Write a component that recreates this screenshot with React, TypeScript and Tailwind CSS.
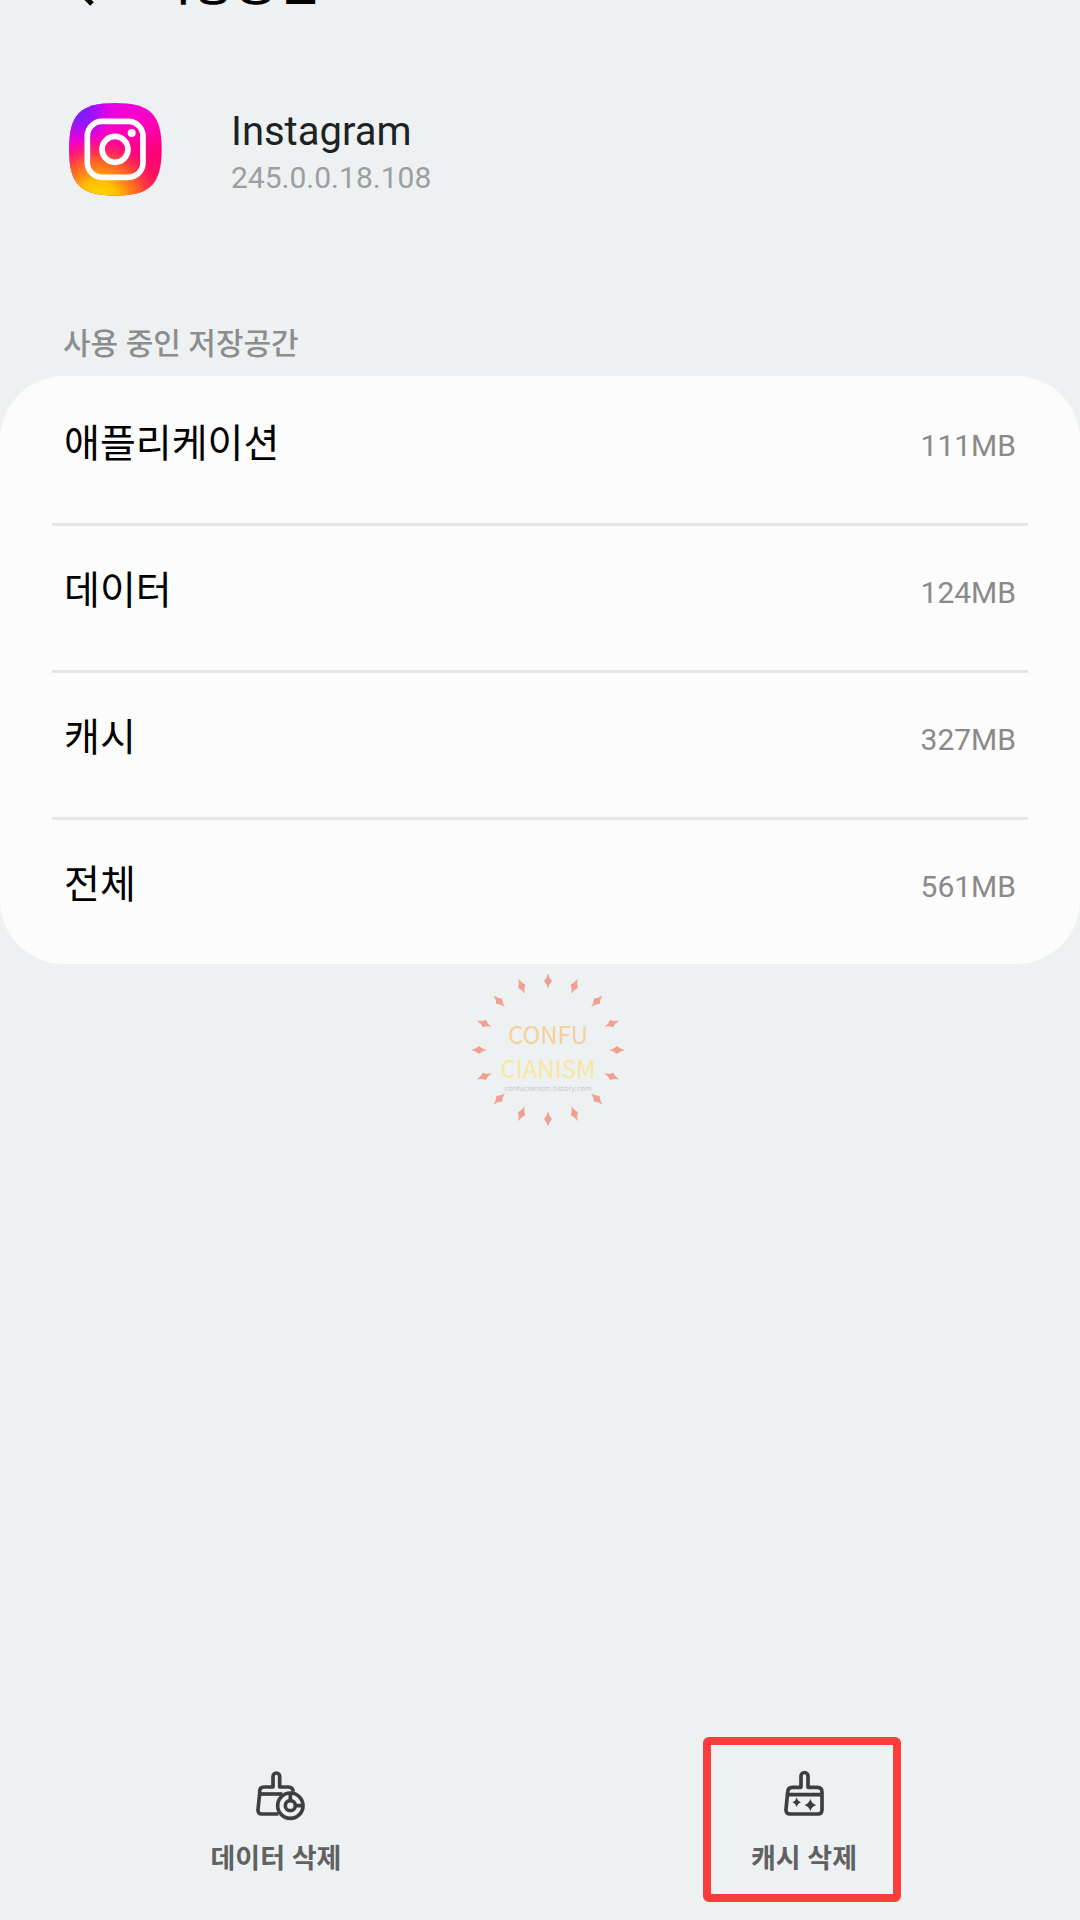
import React from "react";

interface StorageItem {
    label: string;
    value: string;
}

const storageItems: StorageItem[] = [
    { label: "애플리케이션", value: "111MB" },
    { label: "데이터", value: "124MB" },
    { label: "캐시", value: "327MB" },
    { label: "전체", value: "561MB" },
];

const rays = Array.from({ length: 16 }, (_, i) => i * 22.5);

const InstagramLogo: React.FC = () => (
    <svg viewBox="55 36 285 285" className="size-[95px]" aria-hidden="true">
        <defs>
            <linearGradient id="ig-base" x1="0.35" y1="0" x2="0.65" y2="1">
                <stop offset="0" stopColor="#e800ea" />
                <stop offset="0.35" stopColor="#ff00b8" />
                <stop offset="0.65" stopColor="#ff0078" />
                <stop offset="1" stopColor="#ff1a50" />
            </linearGradient>
            <radialGradient id="ig-violet" cx="0.1" cy="0.08" r="0.42">
                <stop offset="0" stopColor="#6a24ff" />
                <stop offset="0.4" stopColor="#8a18ff" stopOpacity="0.8" />
                <stop offset="1" stopColor="#d400ff" stopOpacity="0" />
            </radialGradient>
            <radialGradient id="ig-yellow" cx="0.32" cy="1.05" r="0.7">
                <stop offset="0" stopColor="#ffdc00" />
                <stop offset="0.3" stopColor="#ffc000" />
                <stop offset="0.65" stopColor="#ff6a1c" stopOpacity="0.8" />
                <stop offset="1" stopColor="#ff1060" stopOpacity="0" />
            </radialGradient>
        </defs>
        {["url(#ig-base)", "url(#ig-violet)", "url(#ig-yellow)"].map((fill) => (
            <path
                key={fill}
                fill={fill}
                d="M197 39C302 39 336 73 336 178C336 283 302 317 197 317C92 317 58 283 58 178C58 73 92 39 197 39Z"
            />
        ))}
        <rect x="113" y="94" width="167" height="168" rx="44" fill="none" stroke="#fff" strokeWidth="17" />
        <circle cx="196" cy="178" r="39" fill="none" stroke="#fff" strokeWidth="17" />
        <circle cx="246" cy="129" r="12" fill="#fff" />
    </svg>
);

const DataBrushIcon: React.FC = () => (
    <svg
        viewBox="165 90 189 153"
        className="h-[51px] w-[63px]"
        fill="none"
        stroke="#3d3e40"
        strokeWidth="11"
        strokeLinejoin="round"
        aria-hidden="true"
    >
        <path d="M268 222H219Q206 222 207 209L212 160V154Q212 141 225 141H252V109A10 10 0 0 1 272 109V141H298Q311 141 313 155" />
        <path d="M211 162H280" />
        <circle cx="304" cy="197" r="38" fill="#edf1f2" />
        <circle cx="304" cy="197" r="15" />
        <path d="M304 159V182M319 197H342" />
    </svg>
);

const CacheBrushIcon: React.FC = () => (
    <svg
        viewBox="273 150 138 153"
        className="h-[51px] w-[46px]"
        fill="none"
        stroke="#3d3e40"
        strokeWidth="11"
        strokeLinejoin="round"
        aria-hidden="true"
    >
        <path d="M333 202V168A10 10 0 0 1 354 168V202H382Q396 202 396 216V269Q396 282 383 282H301Q287 282 288 269L293 216Q294 202 307 202Z" />
        <path d="M292 224H396" />
        <path
            d="M320 232Q323 244 333 247Q323 250 320 262Q317 250 307 247Q317 244 320 232ZM361 236Q365 251 379 255Q365 259 361 274Q357 259 343 255Q357 251 361 236Z"
            fill="#3d3e40"
            stroke="none"
        />
    </svg>
);

const Watermark: React.FC = () => (
    <svg viewBox="-76 -76 152 152" className="ml-4 size-[152px]">
        {rays.map((angle) => (
            <path
                key={angle}
                transform={`rotate(${angle}) translate(0 -69)`}
                d="M0 -8Q1 -3 4 0Q1 3 0 8Q-1 3 -4 0Q-1 -3 0 -8Z"
                fill="#f0a092"
            />
        ))}
        <g textAnchor="middle" className="font-['Noto_Sans_CJK_KR',sans-serif]">
            <text y="-6" fontSize="24" fill="#f6cf9a">CONFU</text>
            <text y="28" fontSize="24" fill="#f8e6a0">CIANISM</text>
        </g>
        <text y="41" fontSize="7" textAnchor="middle" fill="#c3c7c9" className="font-['DejaVu_Sans',sans-serif]">
            confucianism.tistory.com
        </text>
    </svg>
);

export default function App() {
    return (
        <div className="flex min-h-screen flex-col overflow-hidden bg-[#edf1f2] font-[Roboto,'Noto_Sans_CJK_KR',sans-serif]">
            {/* Title bar, scrolled mostly out of view */}
            <header className="-mt-12 flex h-16 items-center gap-[52px] pl-16">
                <button type="button" aria-label="뒤로">
                    <svg viewBox="0 0 32 48" className="h-12 w-8" fill="none" stroke="#000" strokeWidth="5" aria-hidden="true">
                        <path d="M28 4L8 24L28 44" />
                    </svg>
                </button>
                <h1 className="text-[47px] leading-[64px] font-medium text-black">저장공간</h1>
            </header>

            {/* App info */}
            <section className="mt-[86px] flex items-start gap-[68px] pl-[68px]">
                <InstagramLogo />
                <div className="pt-1.5">
                    <h2 className="text-[40px] leading-[48px] text-[#1d2223]">Instagram</h2>
                    <p className="text-[30px] leading-[44px] text-[#9c9fa0]">245.0.0.18.108</p>
                </div>
            </section>

            {/* Storage usage */}
            <section className="mt-[122px]">
                <h3 className="px-[63px] text-[30px] leading-[44px] font-medium text-[#8b8d8e]">사용 중인 저장공간</h3>
                <dl className="mt-2.5 rounded-[64px] bg-[#fcfcfc] px-[52px]">
                    {storageItems.map((item) => (
                        <div
                            key={item.label}
                            className="flex h-[147px] items-center justify-between border-t-3 border-[#e6e6e6] px-3 pb-3.5 first:border-transparent"
                        >
                            <dt className="text-[39px] leading-[56px] text-black">{item.label}</dt>
                            <dd className="pt-1 text-[30px] leading-[56px] text-[#8a8a8a]">{item.value}</dd>
                        </div>
                    ))}
                </dl>
            </section>

            <div className="mt-2.5 flex justify-center">
                <Watermark />
            </div>

            {/* Bottom actions */}
            <nav className="mt-auto flex px-3 pb-[18px] text-[27px] leading-[40px] font-bold text-[#5f6162]">
                <div className="flex flex-1 justify-center">
                    <button type="button" className="flex h-[165px] flex-col items-center gap-[18px] pt-[33px]">
                        <DataBrushIcon />
                        데이터 삭제
                    </button>
                </div>
                <div className="flex flex-1 justify-center">
                    <button type="button" className="relative flex h-[165px] w-[202px] flex-col items-center gap-[18px] pt-[33px]">
                        <CacheBrushIcon />
                        캐시 삭제
                        <span className="absolute inset-0 right-1 rounded-md border-8 border-[#f93c3c]" />
                    </button>
                </div>
            </nav>
        </div>
    );
}
